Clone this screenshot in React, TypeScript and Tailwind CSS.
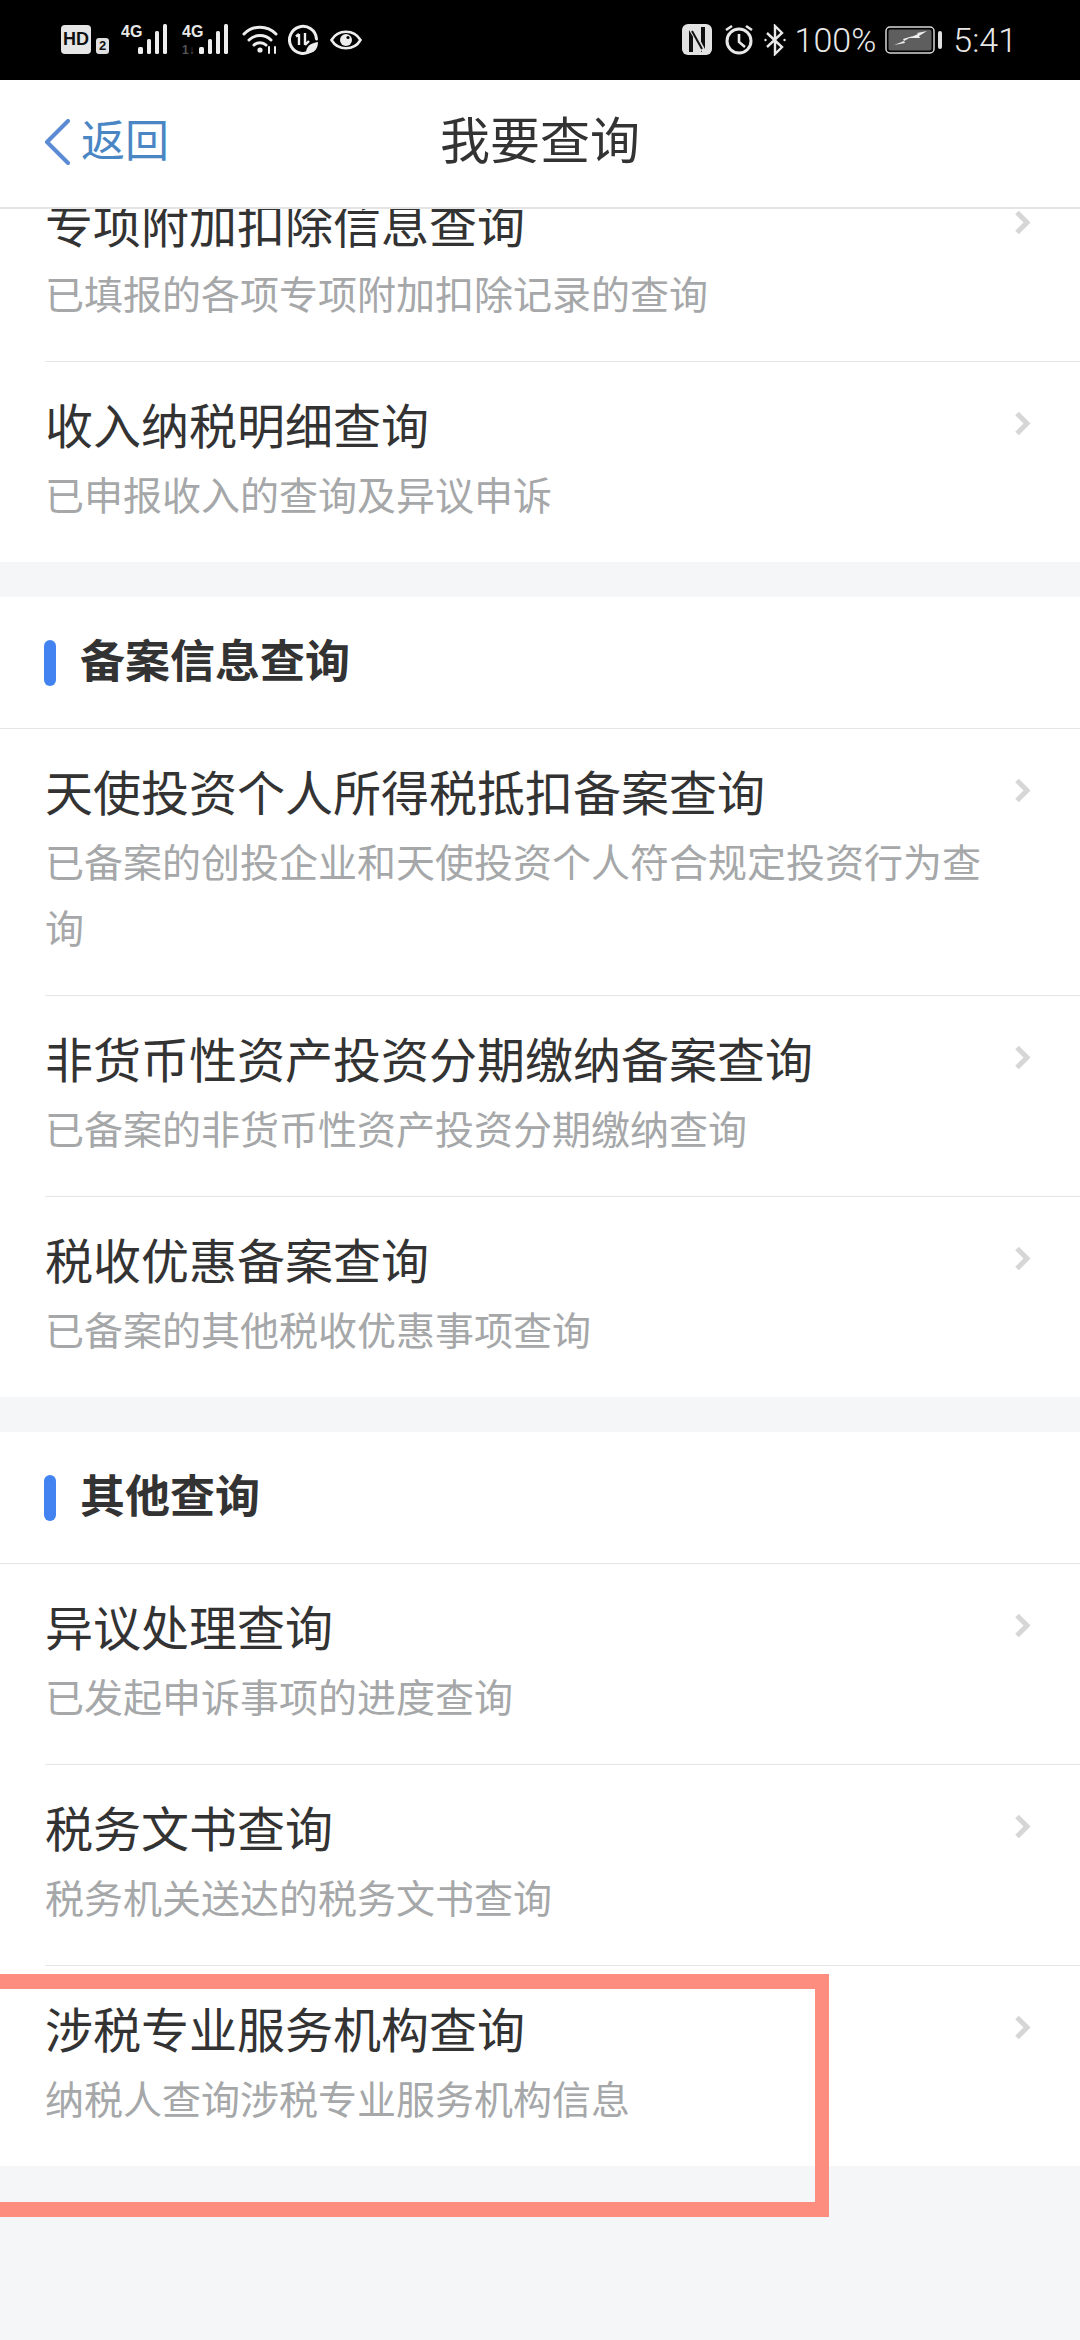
const cjk = "font-['Noto_Sans_CJK_SC','Noto_Sans',sans-serif]"

interface Row {
  title: string
  sub: string
}

const topRows: Row[] = [
  { title: '专项附加扣除信息查询', sub: '已填报的各项专项附加扣除记录的查询' },
  { title: '收入纳税明细查询', sub: '已申报收入的查询及异议申诉' },
]

const filingRows: Row[] = [
  { title: '天使投资个人所得税抵扣备案查询', sub: '已备案的创投企业和天使投资个人符合规定投资行为查询' },
  { title: '非货币性资产投资分期缴纳备案查询', sub: '已备案的非货币性资产投资分期缴纳查询' },
  { title: '税收优惠备案查询', sub: '已备案的其他税收优惠事项查询' },
]

const otherRows: Row[] = [
  { title: '异议处理查询', sub: '已发起申诉事项的进度查询' },
  { title: '税务文书查询', sub: '税务机关送达的税务文书查询' },
  { title: '涉税专业服务机构查询', sub: '纳税人查询涉税专业服务机构信息' },
]

function Signal({ dim }: { dim?: boolean }) {
  return (
    <svg width="50" height="32" viewBox="0 0 50 32" className="shrink-0">
      <text x="0" y="13" fontSize="16" fontWeight="700" fill="#e8e8e8" fontFamily="Liberation Sans Narrow, Liberation Sans, sans-serif">4G</text>
      {dim && <text x="0" y="30" fontSize="12" fontWeight="700" fill="#555" fontFamily="Liberation Sans, sans-serif">1↓</text>}
      <rect x="17" y="23" width="5" height="7" rx="1.5" fill="#eee" />
      <rect x="26" y="15" width="4" height="15" rx="1.5" fill="#eee" />
      <rect x="34" y="7" width="4" height="23" rx="1.5" fill="#eee" />
      <rect x="42" y="0" width="4" height="30" rx="1.5" fill="#eee" />
    </svg>
  )
}

function StatusBar() {
  return (
    <div className="h-20 bg-black flex items-center justify-between pl-[61px] pr-[63px] pb-[1px] shrink-0">
      <div className="flex items-center">
        <div className="w-[30px] h-[29px] rounded-[4px] bg-[#e6e6e6] flex items-center justify-center text-[#111] text-[18px] font-bold font-['Liberation_Sans',sans-serif]">HD</div>
        <div className="w-[13px] h-[16px] ml-[5px] mt-[12px] rounded-[3px] bg-[#e0e0e0] flex items-center justify-center text-[#111] text-[13px] leading-none font-bold font-['Liberation_Sans',sans-serif]">2</div>
        <div className="ml-[12px]"><Signal /></div>
        <div className="ml-[11px]"><Signal dim /></div>
        <svg width="36" height="30" viewBox="0 0 36 30" fill="none" stroke="#eee" strokeWidth="3" strokeLinecap="round" className="ml-[10px]">
          <path d="M2 9C11 0 25 0 34 9" />
          <path d="M7 15C13 9 23 9 29 15" />
          <path d="M12 20C15 17 21 17 24 20" />
          <circle cx="18" cy="25" r="2.6" fill="#eee" stroke="none" />
          <path d="M27 28v-6M33 22v6" strokeWidth="2" />
        </svg>
        <svg width="30" height="31" viewBox="0 0 30 31" fill="none" stroke="#eee" strokeWidth="3" className="ml-[10px]">
          <path d="M24 26A13.5 13.5 0 1 1 28.5 15" strokeLinecap="round" />
          <path d="M11 10v11M11 10l-3 2.5M17 9v12M17 21l4-4" strokeWidth="2.4" />
          <path d="M18 29C18 22 23 19 30 18C30 25 26 30 18 29Z" fill="#eee" stroke="none" />
        </svg>
        <svg width="32" height="24" viewBox="0 0 32 24" fill="none" stroke="#eee" strokeWidth="2.6" className="ml-[12px]">
          <path d="M1.5 12C8 1 24 1 30.5 12C24 23 8 23 1.5 12Z" />
          <circle cx="16" cy="12" r="6" fill="#eee" stroke="none" />
          <circle cx="18" cy="9.5" r="1.6" fill="#000" stroke="none" />
        </svg>
      </div>
      <div className="flex items-center text-[#e8e8e8] text-[34px] leading-none font-['Roboto',sans-serif] font-light">
        <svg width="30" height="31" viewBox="0 0 30 31">
          <rect width="30" height="31" rx="6" fill="#e2e2e2" />
          <path d="M7 3h4v25H7ZM19 3h4v25h-4Z" fill="#111" />
          <path d="M11 3l12 22v3h-3L7 6V3Z" fill="#e2e2e2" />
          <path d="M10 7l10 18" stroke="#111" strokeWidth="2" fill="none" />
        </svg>
        <svg width="30" height="31" viewBox="0 0 30 31" fill="none" stroke="#e8e8e8" strokeWidth="3" className="ml-[12px]">
          <circle cx="15" cy="17" r="12" />
          <path d="M15 10v8l6 5" strokeWidth="2.6" />
          <path d="M2 6l6-4M28 6l-6-4" strokeWidth="2.6" />
        </svg>
        <svg width="22" height="32" viewBox="0 0 22 32" fill="none" stroke="#e8e8e8" strokeWidth="2.4" className="ml-[10px]">
          <path d="M3 9l15 14-7 7V2l7 7L3 23" />
          <circle cx="1.5" cy="16" r="1.2" fill="#e8e8e8" stroke="none" />
          <circle cx="20.5" cy="16" r="1.2" fill="#e8e8e8" stroke="none" />
        </svg>
        <span className="ml-[9px]">100%</span>
        <svg width="58" height="28" viewBox="0 0 58 28" className="ml-[9px]">
          <rect x="1" y="1" width="48" height="26" rx="4" fill="none" stroke="#d8d8d8" strokeWidth="1.5" />
          <rect x="3.5" y="3.5" width="43" height="21" rx="2" fill="#5e5e5e" />
          <path d="M9 19l10-4-1-2 10-3-9 5 1 2ZM24 12l9-4-1-1 10-2-8 5 1 2Z" fill="#eee" />
          <rect x="53" y="5" width="4" height="18" rx="2" fill="#e0e0e0" />
        </svg>
        <span className="ml-[10px]">5:41</span>
      </div>
    </div>
  )
}

function NavBar() {
  return (
    <div className="relative z-10 h-[129px] shrink-0 bg-white border-b-2 border-[#e4e4e4] flex items-center justify-center">
      <div className="absolute left-[44px] top-[39px] flex items-center">
        <svg width="26" height="46" viewBox="0 0 26 46" fill="none" stroke="#5a8bd4" strokeWidth="4" strokeLinecap="round" strokeLinejoin="round">
          <path d="M24 2L3 23l21 21" />
        </svg>
        <span className={`${cjk} ml-[11px] text-[44px] leading-[46px] text-[#4a86c4] -translate-y-[4px]`}>返回</span>
      </div>
      <span className={`${cjk} text-[50px] leading-none text-[#333] mb-[14px]`}>我要查询</span>
    </div>
  )
}

function ListRow({ row, last }: { row: Row; last?: boolean }) {
  return (
    <div className="relative pl-[45px]">
      <div className={`pt-[32px] pb-[36px] pr-[85px] ${last ? '' : 'border-b border-[#e6e6e6]'}`}>
        <div className="text-[48px] leading-[58px] text-[#333]">{row.title}</div>
        <div className="mt-[8px] text-[39px] leading-[66px] text-[#a5a7a9]">{row.sub}</div>
      </div>
      <svg width="17" height="23" viewBox="0 0 17 23" fill="none" stroke="#d6d6d6" strokeWidth="5" className="absolute right-[49px] top-[50px]">
        <path d="M3 1.5l10 10-10 10" />
      </svg>
    </div>
  )
}

function SectionHeader({ title }: { title: string }) {
  return (
    <div className="h-[132px] pl-[44px] flex items-center border-b border-[#e6e6e6]">
      <div className="w-[12px] h-[46px] rounded-full bg-[#4283f1]" />
      <div className="ml-[24px] text-[45px] font-bold text-[#333] leading-none -translate-y-[4px]">{title}</div>
    </div>
  )
}

export default function App() {
  return (
    <div className={`${cjk} relative w-[1080px] h-[2340px] overflow-hidden bg-[#f5f6f8] flex flex-col`}>
      <StatusBar />
      <NavBar />
      {/* list is scrolled so the first row sits under the nav */}
      <div className="flex-1 overflow-hidden">
        <div className="-mt-[48px] bg-white">
          {topRows.map((r, i) => <ListRow key={r.title} row={r} last={i === topRows.length - 1} />)}
        </div>
        <div className="mt-[35px] bg-white">
          <SectionHeader title="备案信息查询" />
          {filingRows.map((r, i) => <ListRow key={r.title} row={r} last={i === filingRows.length - 1} />)}
        </div>
        <div className="mt-[35px] bg-white">
          <SectionHeader title="其他查询" />
          {otherRows.map((r, i) => <ListRow key={r.title} row={r} last={i === otherRows.length - 1} />)}
        </div>
      </div>
      {/* red annotation frame, open past the left edge */}
      <div className="absolute -left-[20px] top-[1974px] w-[849px] h-[243px] border-y-[15px] border-r-[14px] border-[#fd8d7e]" />
    </div>
  )
}
